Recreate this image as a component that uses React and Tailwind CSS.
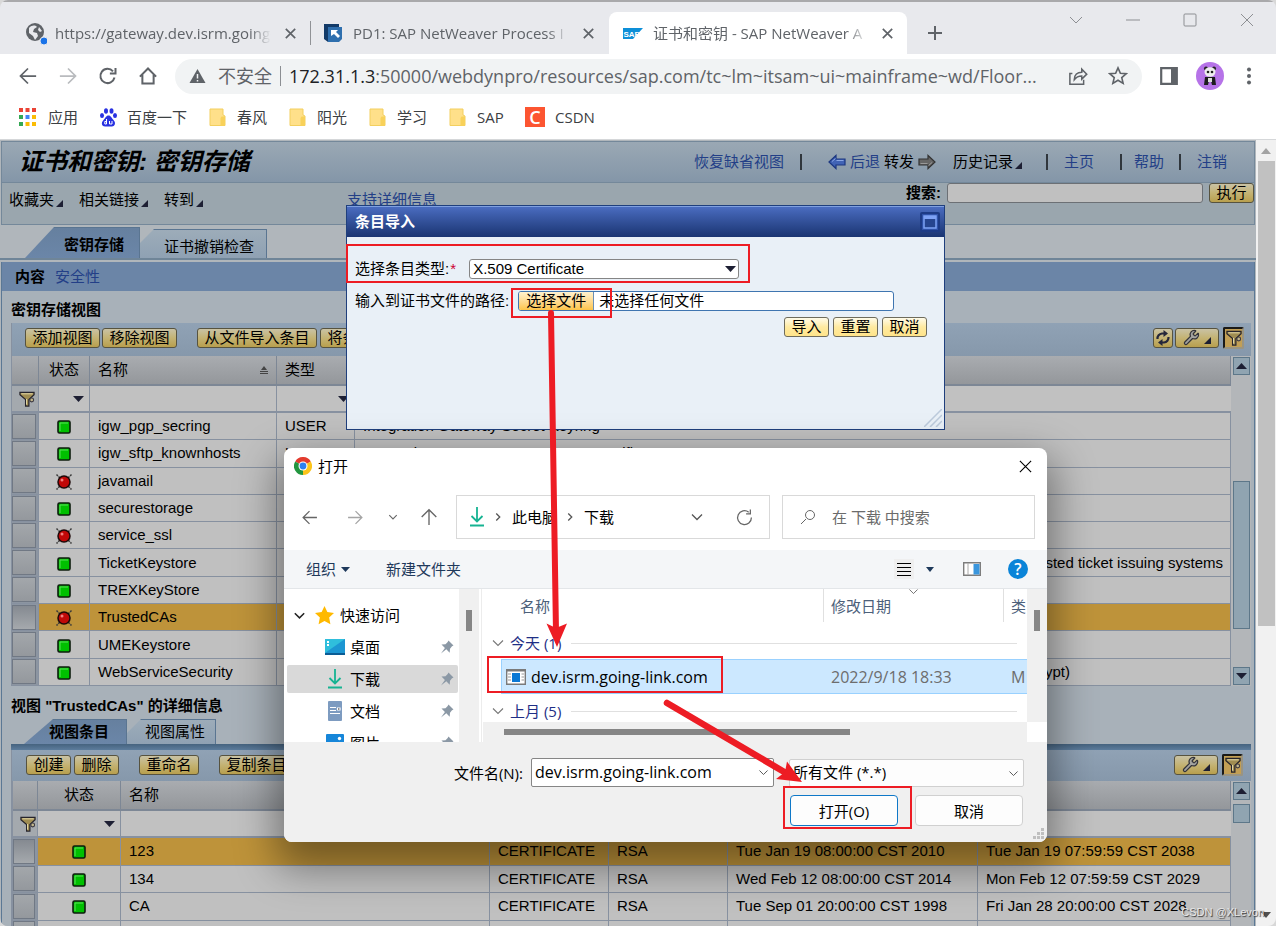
import React, { useState } from 'react';
import clsx from 'clsx';
import { Wrench as WrenchIcon } from 'lucide-react';

const UI_FONT = "font-['Open_Sans','Noto_Sans_CJK_SC',sans-serif]";
const SAP_FONT = "font-['Liberation_Sans','Noto_Sans_CJK_SC',sans-serif]";

const bookmarks = ['春风', '阳光', '学习', 'SAP'];

const keystoreViews = [
  { name: 'igw_pgp_secring', ok: true, type: 'USER', text: 'Integration Gateway Secret Keyring' },
  { name: 'igw_sftp_knownhosts', ok: true, type: 'USER', text: 'Integration Gateway Known Hosts Certificates' },
  { name: 'javamail', ok: false },
  { name: 'securestorage', ok: true },
  { name: 'service_ssl', ok: false },
  { name: 'TicketKeystore', ok: true, tail: 'trusted ticket issuing systems', pad: 'pr-[7px]' },
  { name: 'TREXKeyStore', ok: true },
  { name: 'TrustedCAs', ok: false, selected: true },
  { name: 'UMEKeystore', ok: true },
  { name: 'WebServiceSecurity', ok: true, tail: '(encrypt/decrypt)', pad: 'pr-40' },
];

const entries = [
  { name: '123', algo: 'RSA', from: 'Tue Jan 19 08:00:00 CST 2010', to: 'Tue Jan 19 07:59:59 CST 2038', selected: true },
  { name: '134', algo: 'RSA', from: 'Wed Feb 12 08:00:00 CST 2014', to: 'Mon Feb 12 07:59:59 CST 2029' },
  { name: 'CA', algo: 'RSA', from: 'Tue Sep 01 20:00:00 CST 1998', to: 'Fri Jan 28 20:00:00 CST 2028' },
];

/* ---------- icons ---------- */

const Stroke = ({ d, size = 16, w = 1.5, className }) => (
  <svg width={size} height={size} viewBox="0 0 16 16" fill="none" stroke="currentColor" strokeWidth={w} className={clsx('shrink-0', className)}>
    <path d={d} />
  </svg>
);

const X_PATH = 'M3 3l10 10M13 3L3 13';
const CHEVRON_DOWN = 'M3 5.5l5 5 5-5';
const CHEVRON_RIGHT = 'M6 4l4 4-4 4';

const Corner = () => (
  <svg width="7" height="7" viewBox="0 0 7 7" className="mb-[3px] shrink-0 self-end">
    <path d="M7 0v7H0z" fill="#1d1f33" />
  </svg>
);

const Caret = ({ className, up }) => (
  <svg width="11" height="6" viewBox="0 0 11 6" className={clsx('pointer-events-none shrink-0', className)}>
    <path d={up ? 'M0 6h11L5.500 0z' : 'M0 0h11L5.500 6z'} fill="#1d1f33" />
  </svg>
);

const Folder = () => (
  <svg width="17" height="19" viewBox="0 0 17 19">
    <path d="M1 1h13v6l2 1v9.500H1z" fill="#ffe08a" stroke="#f3cf5f" />
    <path d="M11.500 18V10l1-1.500H16V17l-1 1z" fill="#f8d15a" />
  </svg>
);

const Status = ({ ok }) =>
  ok ? (
    <svg width="14" height="14" viewBox="0 0 14 14" className="mx-auto mt-0.5">
      <rect x="1" y="1" width="12" height="12" rx="1.500" fill="#00c000" stroke="#0c1c0c" strokeWidth="1.600" />
      <path d="M3 11V3h8" stroke="#5ae05a" fill="none" />
    </svg>
  ) : (
    <svg width="18" height="18" viewBox="0 0 18 18" className="mx-auto mt-0.5">
      <path d="M1.500 1.500l15 15M16.500 1.500l-15 15" stroke="#3c3c3c" strokeWidth="1.500" strokeDasharray="2 .8" />
      <circle cx="9" cy="9" r="6" fill="#c00808" stroke="#1c0808" strokeWidth="1.500" />
      <circle cx="7" cy="7" r="1.500" fill="#f08080" />
    </svg>
  );

const Funnel = () => (
  <svg width="16" height="16" viewBox="0 0 17 17" className="shrink-0">
    <path d="M1 1.500h15v2.500L10.500 9v7h-3.500V9L1 4z" fill="#a08d52" stroke="#26242c" strokeWidth="1.300" />
    <path d="M2.500 3h12M8 8.500v6" stroke="#e5dcae" />
    <circle cx="13.500" cy="9.500" r="2" fill="#c3b78c" stroke="#3c3a42" strokeWidth="1.200" />
  </svg>
);

const Wrench = () => <WrenchIcon size={17} strokeWidth={1.8} fill="#a3a3a0" color="#33333a" />;

const Refresh = () => (
  <svg width="16" height="16" viewBox="0 0 16 16" fill="none" stroke="#25273a" strokeWidth="2.200">
    <path d="M2.500 9a5 5 0 0 1 4.500-5.500h2M13.500 7a5 5 0 0 1-4.500 5.500H7" />
    <path d="M8.500 0v7l4.500-3.500zM7.500 9v7L3 12.500z" fill="#25273a" stroke="none" />
  </svg>
);

const BigArrow = ({ back }) => (
  <svg width="18" height="16" viewBox="0 0 18 16" className={back ? '' : 'rotate-180'}>
    <path d="M1 8l7-6.500v3.500h9v6H8v3.500z" fill={back ? '#4163b5' : '#666'} stroke={back ? '#1c3780' : '#333'} strokeWidth="1.200" />
    <path d="M4 7.500l3.500-3M8.500 6.500h7" stroke={back ? '#8aa6e4' : '#999'} />
  </svg>
);

const DownloadIcon = ({ size = 20 }) => (
  <svg width={size} height={size} viewBox="0 0 20 20" fill="none" stroke="#16b392" strokeWidth="1.800">
    <path d="M10 0v14M4.500 9l5.500 5.500L15.500 9M3 18.500h14" />
  </svg>
);

const Pin = () => (
  <svg width="14" height="14" viewBox="0 0 14 14" className="ml-auto shrink-0">
    <path d="M8.500.5l5 5-1.500.8-2 2.400-.3 4L6.300 9.300 1 13.500 4.900 7.900 1.500 4.500l4-.3 2.200-2.200z" fill="#8b98a5" />
  </svg>
);

const ChromeLogo = () => (
  <svg width="18" height="18" viewBox="0 0 18 18">
    <path d="M9 9L1.200 4.500A9 9 0 0 1 16.800 4.500z" fill="#e33b2e" />
    <path d="M9 9l7.800-4.500A9 9 0 0 1 9 18z" fill="#fcc41a" />
    <path d="M9 9v9A9 9 0 0 1 1.200 4.500z" fill="#22963f" />
    <circle cx="9" cy="9" r="4.500" fill="#fff" />
    <circle cx="9" cy="9" r="3.400" fill="#2d7ff0" />
  </svg>
);

/* ---------- browser chrome ---------- */

const Tab = ({ icon, title, width }) => (
  <div className={clsx('flex h-full items-center', width)}>
    {icon}
    <span className="ml-2 flex-1 overflow-hidden text-[15px] whitespace-nowrap text-[#5f6368] [mask-image:linear-gradient(to_right,#000_90%,transparent)]">{title}</span>
    <button aria-label="关闭标签页" className="ml-3 text-[#5f6368]">
      <Stroke d={X_PATH} size={15} w={1.8} />
    </button>
  </div>
);

const BrowserBar = () => (
  <header className={clsx('shrink-0 text-[#5f6368]', UI_FONT)}>
    <div className="flex h-[54px] items-end border-t-2 border-[#a9a9ab] bg-[#e8e9ed]">
      <div className="flex h-[42px] min-w-0 flex-1 items-center">
        <div className="flex h-full w-[310px] items-center pl-[25px]">
          <Tab
            width="w-[273px]"
            title="https://gateway.dev.isrm.going-link"
            icon={
              <svg width="22" height="23" viewBox="0 0 22 23" className="shrink-0">
                <circle cx="10" cy="10" r="9" fill="#5f6368" />
                <path d="M4 6c3-3 6-3 8-1l-3 2-1 3 4 1 1 3-3 4-2-4-4-3zM14 5l3 4-2 1-2-2z" fill="#e8e9ed" />
                <circle cx="19" cy="19" r="4" fill="#1a73e8" stroke="#e8e9ed" />
              </svg>
            }
          />
        </div>
        <div className="flex h-6 w-[299px] items-center border-l border-[#909296] pl-3">
          <Tab
            width="w-[273px]"
            title="PD1: SAP NetWeaver Process I"
            icon={
              <svg width="20" height="20" viewBox="0 0 20 20" className="mr-0.5 shrink-0">
                <path d="M1 1h15v4H5v14L1 16z" fill="#123a68" />
                <path d="M5 4h14v12l-3 3H5z" fill="#2f6fae" />
                <path d="M8 7h7l-2 2 4 4-2 2-4-4-3 2z" fill="#fff" />
              </svg>
            }
          />
        </div>
        <div className="flex h-full w-[298px] items-center rounded-t-lg bg-white pr-3 pl-3.5">
          <Tab
            width="w-full"
            title="证书和密钥 - SAP NetWeaver A"
            icon={
              <svg width="20" height="11" viewBox="0 0 20 11" className="mr-0.5 shrink-0">
                <path d="M0 0h20L10 11H0z" fill="#0d8fd8" />
                <text x="0.500" y="8.500" fontSize="8" fontWeight="700" fill="#fff" fontFamily="Liberation Sans">SAP</text>
              </svg>
            }
          />
        </div>
        <button aria-label="新标签页" className="ml-5">
          <Stroke d="M8 1v14M1 8h14" w={2} />
        </button>
      </div>
      <div className="flex gap-[41px] self-start pt-2.5 pr-[21px] text-[#8d8f93]">
        <button aria-label="搜索标签页"><Stroke d="M2 5l6 6 6-6" w={1} /></button>
        <button aria-label="最小化"><Stroke d="M1 8h14" w={1} /></button>
        <button aria-label="最大化"><Stroke d="M3 2h10a1 1 0 0 1 1 1v10a1 1 0 0 1-1 1H3a1 1 0 0 1-1-1V3a1 1 0 0 1 1-1z" w={1} /></button>
        <button aria-label="关闭"><Stroke d="M2 2l12 12M14 2L2 14" w={1} /></button>
      </div>
    </div>

    <div className="flex h-11 items-center bg-white pl-[18px]">
      <div className="flex gap-5">
        <button aria-label="后退"><Stroke d="M14.500 8H2M8 2L2 8l6 6" size={20} w={1.4} /></button>
        <button aria-label="前进" className="text-[#b9bbbe]"><Stroke d="M1.500 8H14M8 2l6 6-6 6" size={20} w={1.4} /></button>
        <button aria-label="重新加载"><Stroke d="M13.200 9.200A5.700 5.700 0 1 1 12 4.300M14 1.500v4.500H9.500" size={20} w={1.6} /></button>
        <button aria-label="主页"><Stroke d="M1.500 8.500L8 2l6.500 6.500M3.500 7v7h9V7" size={20} w={1.6} /></button>
      </div>
      <div className="ml-[17px] flex h-[35px] min-w-0 flex-1 items-center rounded-full bg-[#f1f3f4] pr-3.5 pl-3.5">
        <svg width="17" height="16" viewBox="0 0 17 16" className="shrink-0">
          <path d="M8.500 1L16.500 15H.5z" fill="#5f6368" />
          <path d="M8.500 6v4.500M8.500 12v1.500" stroke="#f1f3f4" strokeWidth="1.500" />
        </svg>
        <span className="ml-3 text-lg whitespace-nowrap">不安全</span>
        <span className="mx-2 h-5 w-px shrink-0 bg-[#8c8f93]" />
        <span className="min-w-0 flex-1 text-lg whitespace-nowrap">
          <span className="text-[#202124]">172.31.1.3</span>:50000/webdynpro/resources/sap.com/tc~lm~itsam~ui~mainframe~wd/Floor...
        </span>
        <button aria-label="分享" className="ml-4"><Stroke d="M3.500 6H1.500v8.500h11V11M5 11c0-4 2.500-6 6-6V2.500L15 6.500l-4 4V8C8 8 6.500 9 5 11z" size={20} w={1.2} /></button>
        <button aria-label="收藏" className="ml-5"><Stroke d="M8 1.500l1.900 4.300 4.600.4-3.500 3.100 1.100 4.600L8 11.400l-4.100 2.500L5 9.300 1.500 6.200l4.600-.4z" size={20} w={1.3} /></button>
      </div>
      <div className="ml-[18px] flex items-center gap-[18px] pr-6">
        <button aria-label="侧边栏">
          <svg width="18" height="18" viewBox="0 0 18 18"><path d="M1.200 1.200h15.600v15.600H1.200z" fill="#fff" stroke="#5f6368" strokeWidth="2.200" /><path d="M11 1h6v16h-6z" fill="#5f6368" /></svg>
        </button>
        <button aria-label="个人资料">
          <svg width="28" height="28" viewBox="0 0 28 28">
            <circle cx="14" cy="14" r="14" fill="#b673e8" />
            <circle cx="10" cy="6.500" r="2" fill="#222" /><circle cx="18" cy="6.500" r="2" fill="#222" />
            <ellipse cx="14" cy="10" rx="5.500" ry="4.800" fill="#eee" />
            <circle cx="12" cy="10" r="1.300" fill="#222" /><circle cx="16" cy="10" r="1.300" fill="#222" />
            <path d="M9 15h10l1 8h-4l-1-4h-2l-1 4H8z" fill="#1c1c1c" />
            <path d="M12 16h4v4h-4z" fill="#ddd" />
          </svg>
        </button>
        <button aria-label="菜单" className="ml-1">
          <svg width="6" height="18" viewBox="0 0 6 18" fill="#5f6368"><circle cx="3" cy="2.500" r="2" /><circle cx="3" cy="9" r="2" /><circle cx="3" cy="15.500" r="2" /></svg>
        </button>
      </div>
    </div>

    <nav className="flex h-[42px] items-center border-b border-[#d5d7d9] bg-white pb-[3px] pl-[19px] text-[15px] text-[#3c4043]">
      <a href="#apps" className="flex items-center gap-3">
        <svg width="17" height="18" viewBox="0 0 17 18">
          <path d="M0 0h4v4H0zM6.500 0h4v4h-4zM13 0h4v4h-4z" fill="#ea4335" />
          <path d="M0 7h4v4H0zM0 14h4v4H0z" fill="#34a853" />
          <path d="M6.500 7h4v4h-4z" fill="#4285f4" />
          <path d="M13 7h4v4h-4zM6.500 14h4v4h-4zM13 14h4v4h-4z" fill="#fbbc04" />
        </svg>
        应用
      </a>
      <a href="#baidu" className="ml-[22px] flex items-center gap-2.5">
        <svg width="17" height="19" viewBox="0 0 17 19" fill="#2932e1">
          <ellipse cx="6" cy="3" rx="2" ry="2.800" /><ellipse cx="11.500" cy="3" rx="2" ry="2.800" />
          <ellipse cx="2" cy="7.500" rx="2" ry="2.600" /><ellipse cx="15" cy="7.500" rx="2" ry="2.600" />
          <path d="M8.500 7.500c2.500 0 3 2.500 5 4.500 3 3 1 6.500-1.500 6.500H5C2 18.500.5 15 3.500 12c2-2 2.500-4.500 5-4.500z" />
          <path d="M6.500 11v5H4.800v-2.500h1.700M9.500 13v3h2.500v-3" stroke="#fff" fill="none" />
        </svg>
        百度一下
      </a>
      {bookmarks.map((b) => (
        <a key={b} href="#folder" className="ml-[22px] flex w-[58px] items-center gap-[11px]">
          <Folder />
          {b}
        </a>
      ))}
      <a href="#csdn" className="ml-[18px] flex items-center gap-2.5">
        <span className="flex size-5 items-center justify-center bg-[#fc5531] text-lg leading-5 font-semibold text-white">C</span>
        CSDN
      </a>
    </nav>
  </header>
);

/* ---------- SAP page parts ---------- */

const SapButton = ({ children, dim = true, className }) => (
  <button
    className={clsx(
      'flex h-5 shrink-0 items-center justify-center rounded-[3px] border text-[15px] leading-[18px] whitespace-nowrap text-black',
      dim ? 'border-[#57533f] bg-linear-to-b from-[#c9c2a4] via-[#c4b373] to-[#b89f4d]' : 'border-[#6f6c5c] bg-linear-to-b from-[#fffbe9] via-[#ffeaa0] to-[#ffe48a]',
      className,
    )}
  >
    {children}
  </button>
);

const FilterToggle = () => (
  <button aria-label="过滤器" className="flex h-[22px] w-[21px] items-center justify-center rounded-xs border-2 border-[#1b1a18] border-r-[#9a9482] border-b-[#9a9482] bg-[#c29f55]">
    <Funnel />
  </button>
);

const ScrollKey = ({ up }) => (
  <button aria-label={up ? '向上滚动' : '向下滚动'} className="flex h-[18px] w-[17px] shrink-0 items-center justify-center border border-[#5d7789] bg-[#90a4b1]">
    <Caret up={up} />
  </button>
);

const Th = ({ children, className = 'text-left' }) => (
  <th className={clsx('h-[30px] border-r border-b-2 border-[#7d8795] bg-linear-to-b from-[#a9acb0] to-[#94979b] px-2 font-normal', className)}>{children}</th>
);

const FilterCells = ({ rest }) => (
  <tr className="h-[27px]">
    <td className="border-r border-b-2 border-[#8791a0] bg-[#a4a9ae] pl-[7px]"><Funnel /></td>
    <td className="border-r border-b-2 border-[#8791a0] bg-[#c1c1c1]">
      <div className="relative flex items-center justify-end pr-[5px]">
        <select aria-label="按状态过滤" className="absolute inset-0 w-full appearance-none" />
        <Caret />
      </div>
    </td>
    {rest.map((kind, i) => (
      <td key={i} className={clsx('border-b-2 border-[#8791a0] bg-[#c1c1c1]', i < rest.length - 1 && 'border-r')}>
        {kind === 'select' ? (
          <div className="relative flex items-center justify-end pr-[5px]">
            <select aria-label="过滤" className="absolute inset-0 w-full appearance-none" />
            <Caret />
          </div>
        ) : (
          <input aria-label="过滤" className="block h-5 w-full px-2 outline-none" />
        )}
      </td>
    ))}
  </tr>
);

const RowKey = ({ selected }) => (
  <td className="border-r border-b border-[#8791a0] bg-[#8c95a1] p-0 pr-0.5">
    <button aria-label="选择行" className={clsx('block h-[25px] w-full border border-[#707884] bg-linear-to-b', selected ? 'from-[#858a91] to-[#a5a9ad]' : 'from-[#a3a7ab] to-[#94989d]')} />
  </td>
);

const cell = (selected) => clsx('border-r border-b border-[#8791a0] px-2 py-0 whitespace-nowrap', selected ? 'bg-[#be933a]' : 'bg-[#c0c0c0]');

const SapTabs = ({ tabs }) => (
  <div className="flex items-end" role="tablist">
    {tabs.map((t) => (
      <button
        key={t.label}
        role="tab"
        aria-selected={!!t.active}
        className={clsx(
          'shrink-0 border-t border-r border-[#5a7591] whitespace-nowrap text-[15px] leading-5',
          t.active
            ? 'bg-linear-to-b from-[#66809f] to-[#6b86a8] font-bold [clip-path:polygon(29px_0,100%_0,100%_100%,0_100%)]'
            : 'bg-linear-to-b from-[#9dacb9] to-[#8fa1b3] [clip-path:polygon(14px_0,100%_0,100%_100%,0_100%,0_14px)]',
          t.size,
        )}
      >
        {t.label}
      </button>
    ))}
  </div>
);

const Sep = ({ className }) => <span className={clsx('h-4 w-0.5 bg-[#30363c]', className)} />;

const SapHeader = () => (
  <div className="mt-px mr-px ml-px border border-[#74889a] text-[15px] leading-5">
    <div className="flex h-[41px] items-center justify-between border-b border-[#74889a] bg-linear-to-b from-[#9aa8b4] to-[#8496a8] pr-[27px] pl-[17px]">
      <h1 className="text-2xl leading-7 font-bold whitespace-nowrap italic">证书和密钥: 密钥存储</h1>
      <div className="flex items-center whitespace-nowrap text-[#233f87]">
        <a href="#reset">恢复缺省视图</a>
        <Sep className="ml-4" />
        <a href="#back" className="ml-[26px] flex items-center gap-1"><BigArrow back />后退</a>
        <a href="#fwd" className="ml-1 flex items-center gap-1 text-black">转发<BigArrow /></a>
        <button className="ml-[17px] flex items-center text-black">历史记录<span className="ml-0.5 self-end"><Corner /></span></button>
        <Sep className="ml-6" />
        <a href="#home" className="ml-4">主页</a>
        <Sep className="ml-[26px]" />
        <a href="#help" className="ml-3">帮助</a>
        <Sep className="ml-[15px]" />
        <a href="#logoff" className="ml-4">注销</a>
      </div>
    </div>
    <div className="flex h-[41px] bg-[#9aa6ae]">
      <div className="flex h-full items-center gap-4 pb-2 pl-[7px] whitespace-nowrap">
        {['收藏夹', '相关链接', '转到'].map((m) => (
          <button key={m} className="flex items-end gap-0.5">
            {m}
            <Corner />
          </button>
        ))}
        <a href="#support" className="ml-32 text-[#233f87]">支持详细信息</a>
      </div>
      <form className="ml-auto flex h-5 items-center">
        <label htmlFor="search" className="mr-1.5 font-bold">搜索:</label>
        <input id="search" className="h-5 w-64 rounded-[3px] border border-[#6c7075] bg-[#c0c0c0] px-1" />
        <SapButton className="ml-1.5 w-[45px]">执行</SapButton>
      </form>
    </div>
  </div>
);

const ViewTable = () => (
  <div className="flex border-l border-[#8791a0]">
    <table className="h-[330px] min-w-0 flex-1 table-fixed border-separate border-spacing-0 text-[15px] leading-5">
      <colgroup>
        <col className="w-[27px]" />
        <col className="w-[51px]" />
        <col className="w-[187px]" />
        <col className="w-[78px]" />
        <col />
      </colgroup>
      <thead>
        <tr className="h-[30px]">
          <Th />
          <Th className="text-center">状态</Th>
          <Th>
            <div className="flex items-center justify-between">
              名称
              <svg width="8" height="8" viewBox="0 0 8 8"><path d="M4 0l3 4H1zM0 5h8v1H0zM0 7h8v1H0z" fill="#444" /></svg>
            </div>
          </Th>
          <Th>类型</Th>
          <Th>描述</Th>
        </tr>
      </thead>
      <tbody>
        <FilterCells rest={['input', 'select', 'input']} />
        {keystoreViews.map((v) => (
          <tr key={v.name}>
            <RowKey selected={v.selected} />
            <td className={clsx(cell(v.selected), 'text-center')}><Status ok={v.ok} /></td>
            <td className={cell(v.selected)}>{v.name}</td>
            <td className={cell(v.selected)}>{v.type}</td>
            <td className={clsx(cell(v.selected), v.tail && 'text-right', v.pad)}>{v.text || v.tail}</td>
          </tr>
        ))}
      </tbody>
    </table>
    <div className="flex w-5 shrink-0 flex-col items-center bg-[#b3b6b9] pt-px pb-px">
      <ScrollKey up />
      <div className="mt-[106px] mb-auto h-[148px] w-[17px] border border-[#5d7789] bg-[#90a4b1]" />
      <ScrollKey />
    </div>
  </div>
);

const EntryTable = () => (
  <div className="flex border-l-2 border-[#8791a0]">
    <table className="h-[167px] min-w-0 flex-1 table-fixed border-separate border-spacing-0 text-[15px] leading-5">
      <colgroup>
        <col className="w-[25px]" />
        <col className="w-[83px]" />
        <col className="w-[369px]" />
        <col className="w-[119px]" />
        <col className="w-[119px]" />
        <col className="w-[250px]" />
        <col />
      </colgroup>
      <thead>
        <tr className="h-[30px]">
          <Th />
          <Th className="text-center">状态</Th>
          <Th>名称</Th>
          <Th>类型</Th>
          <Th>算法</Th>
          <Th>有效期自</Th>
          <Th>至</Th>
        </tr>
      </thead>
      <tbody>
        <FilterCells rest={['input', 'input', 'input', 'input', 'input']} />
        {entries.map((e) => (
          <tr key={e.name}>
            <RowKey selected={e.selected} />
            <td className={cell(e.selected)}><Status ok /></td>
            <td className={cell(e.selected)}>{e.name}</td>
            <td className={cell(e.selected)}>CERTIFICATE</td>
            <td className={cell(e.selected)}>{e.algo}</td>
            <td className={cell(e.selected)}>{e.from}</td>
            <td className={cell(e.selected)}>{e.to}</td>
          </tr>
        ))}
        <tr>
          <RowKey />
          {[0, 1, 2, 3, 4, 5].map((i) => <td key={i} className={cell(false)} />)}
        </tr>
      </tbody>
    </table>
    <div className="flex w-5 shrink-0 flex-col items-center gap-1 bg-[#b3b6b9] pt-px">
      <ScrollKey up />
      <div className="h-[19px] w-[17px] border border-[#5d7789] bg-[#90a4b1]" />
    </div>
  </div>
);

const SapPage = () => (
  <div className="min-w-0 flex-1 overflow-hidden bg-[#b0b6bb] text-black">
    <SapHeader />
    <div className="flex h-[35px] items-end border-b-2 border-[#6f8598] pl-[25px]">
      <SapTabs
        tabs={[
          { label: '密钥存储', active: true, size: 'h-[31px] w-[115px] pt-1 pl-6' },
          { label: '证书撤销检查', size: 'h-[29px] w-[127px] pt-1.5 pl-3' },
        ]}
      />
    </div>
    <div className="mx-px border-x border-[#5b7895] bg-[#a8b1b9]">
      <nav className="mt-0.5 flex h-[29px] items-center gap-2.5 bg-[#6b85a7] pl-[13px] text-[15px] leading-5">
        <b>内容</b>
        <a href="#security" className="text-[#233f87]">安全性</a>
      </nav>
      <div className="pr-[3px] pl-[9px]">
        <h2 className="h-8 pt-[9px] text-[15px] leading-5 font-bold">密钥存储视图</h2>
        <div className="flex h-[33px] items-center border-l border-[#8791a0] bg-linear-to-b from-[#90a2b5] to-[#8698ab] pb-1 pl-[13px]">
          <SapButton className="w-[75px]">添加视图</SapButton>
          <SapButton className="ml-0.5 w-[75px]">移除视图</SapButton>
          <SapButton className="ml-5 w-[120px]">从文件导入条目</SapButton>
          <SapButton className="ml-[3px] w-[120px]">将条目导出文件</SapButton>
          <div className="ml-auto flex items-center gap-0.5 pr-[7px]">
            <SapButton className="w-5"><Refresh /></SapButton>
            <SapButton className="mr-0.5 w-11 gap-1"><Wrench /><Corner /></SapButton>
            <FilterToggle />
          </div>
        </div>
        <ViewTable />
        <h2 className="h-[33px] pt-2.5 text-[15px] leading-5 font-bold">视图 "TrustedCAs" 的详细信息</h2>
        <div className="flex h-[25px] items-end pl-[13px]">
          <SapTabs
            tabs={[
              { label: '视图条目', active: true, size: 'h-[25px] w-[103px] pl-2' },
              { label: '视图属性', size: 'h-[25px] w-[89px] pl-2' },
            ]}
          />
        </div>
        <div className="h-1.5 bg-linear-to-b from-[#46637f] to-[#5c7c9c]" />
        <div className="flex h-[31px] items-center border-l border-[#8791a0] bg-linear-to-b from-[#90a2b5] to-[#8698ab] pb-0.5 pl-[14px]">
          <SapButton className="w-[45px]">创建</SapButton>
          <SapButton className="ml-[3px] w-[45px]">删除</SapButton>
          <SapButton className="ml-5 w-[60px]">重命名</SapButton>
          <SapButton className="ml-5 w-[75px]">复制条目</SapButton>
          <div className="ml-auto flex items-center gap-1 pr-2">
            <SapButton className="w-11 gap-1"><Wrench /><Corner /></SapButton>
            <FilterToggle />
          </div>
        </div>
        <EntryTable />
      </div>
    </div>
  </div>
);

/* ---------- import popup ---------- */

const ImportPopup = () => (
  <section className={clsx('absolute top-[65px] left-[346px] flex h-[225px] w-[599px] flex-col border border-[#1f3f7d] bg-[#e9f0f7] text-[15px] leading-5 text-black', SAP_FONT)}>
    <div className="flex h-[31px] shrink-0 items-center justify-between border-t border-[#7fa0e0] bg-linear-to-b from-[#4a6cc0] to-[#1b3572] pr-1 pl-2 text-white">
      <b>条目导入</b>
      <button aria-label="最大化" className="flex size-5 items-center justify-center rounded-xs border-2 border-[#1d3b86] bg-[#2f52a8]">
        <svg width="14" height="14" viewBox="0 0 14 14"><path d="M1 1h12v12H1z" fill="#26458f" stroke="#7ea2f5" strokeWidth="1.500" /><path d="M1 1h12v3H1z" fill="#7ea2f5" /></svg>
      </button>
    </div>
    <div className="mt-[22px] flex items-center pl-2">
      <label htmlFor="entryType" className="flex">选择条目类型:<span className="w-2 text-center text-[#c03]">*</span></label>
      <div className="relative ml-3 w-[270px]">
        <select id="entryType" className="block h-5 w-full appearance-none rounded-[3px] border border-[#858585] bg-white px-[3px] leading-[18px]">
          <option>X.509 Certificate</option>
        </select>
        <Caret className="absolute top-[7px] right-[3px]" />
      </div>
    </div>
    <div className="mt-3 flex items-center pl-2">
      <span>输入到证书文件的路径:</span>
      <div className="ml-[9px] flex h-5 w-[376px] items-center overflow-hidden rounded-[3px] border border-[#3f75b0] bg-white">
        <button className="h-full w-[75px] border-r border-[#6b8fb5] bg-linear-to-b from-[#fff2cf] to-[#fdc445] leading-[18px]">选择文件</button>
        <span className="ml-[5px]">未选择任何文件</span>
      </div>
    </div>
    <div className="mt-1.5 flex justify-end gap-1 pr-[17px]">
      <SapButton dim={false} className="w-[45px]">导入</SapButton>
      <SapButton dim={false} className="w-[45px]">重置</SapButton>
      <SapButton dim={false} className="w-[45px]">取消</SapButton>
    </div>
    <svg width="18" height="18" viewBox="0 0 18 18" className="mt-auto mr-0.5 mb-0.5 self-end" stroke="#bccadb" strokeWidth="1.500">
      <path d="M0 18L18 0M6 18L18 6M12 18l6-6" />
    </svg>
  </section>
);

/* ---------- file dialog ---------- */

const QuickItem = ({ icon, label, active }) => (
  <button className={clsx('mr-px ml-[3px] flex h-7 shrink-0 items-center rounded-xs pr-1 pl-[38px]', active && 'bg-[#d9d9d9]')}>
    <span className="flex w-5 justify-center">{icon}</span>
    <span className="ml-[5px]">{label}</span>
    <Pin />
  </button>
);

const GroupRow = ({ label, height }) => (
  <tr>
    <td colSpan={3} className={clsx('p-0 pb-1.5 align-bottom', height)}>
      <div className="flex items-center pr-2.5 pl-1.5 text-[#1f2f86]">
        <Stroke d={CHEVRON_DOWN} w={1.1} className="text-[#777]" />
        <span className="ml-1 whitespace-nowrap">{label}</span>
        <span className="ml-2.5 h-px flex-1 bg-[#e0e0e0]" />
      </div>
    </td>
  </tr>
);

const FileDialog = () => {
  const [fileName, setFileName] = useState('dev.isrm.going-link.com');

  return (
    <section className={clsx('absolute top-[308px] left-[284px] flex w-[763px] flex-col overflow-hidden rounded-lg bg-white text-[15px] leading-5 text-black shadow-[0_18px_40px_8px_rgba(0,0,0,0.4)]', UI_FONT)}>
      <div className="flex h-9 items-center pr-3.5 pl-2.5">
        <ChromeLogo />
        <span className="ml-1.5">打开</span>
        <button aria-label="关闭" className="ml-auto"><Stroke d="M2 2l12 12M14 2L2 14" w={1.2} size={15} /></button>
      </div>

      <div className="mt-[11px] flex h-11 items-center pr-3 pl-[17px] text-[#666]">
        <button aria-label="后退"><Stroke d="M15 8H2M8 2L2 8l6 6" w={1.2} size={17} /></button>
        <button aria-label="前进" className="ml-[29px] text-[#a5a5a5]"><Stroke d="M1 8h13M8 2l6 6-6 6" w={1.2} size={17} /></button>
        <button aria-label="最近位置" className="ml-[23px]"><Stroke d={CHEVRON_DOWN} size={12} w={1.5} /></button>
        <button aria-label="上移" className="ml-[21px]"><Stroke d="M8 15V1.500M1.500 8L8 1.500 14.500 8" w={1.2} size={18} /></button>
        <div className="ml-[18px] flex h-full w-[314px] items-center border border-[#d9d9d9] pl-2.5 text-black">
          <DownloadIcon />
          <Stroke d={CHEVRON_RIGHT} size={14} className="ml-1 text-[#555]" />
          <span className="ml-[7px]">此电脑</span>
          <Stroke d={CHEVRON_RIGHT} size={14} className="ml-1.5 text-[#555]" />
          <span className="ml-[7px]">下载</span>
          <button aria-label="展开" className="ml-auto text-[#555]"><Stroke d={CHEVRON_DOWN} w={1.3} /></button>
          <button aria-label="刷新" className="mr-4 ml-[31px] text-[#666]"><Stroke d="M14.500 8A6.500 6.500 0 1 1 12 3M13.500 .5v4H9.500" size={17} w={1.2} /></button>
        </div>
        <div className="ml-3 flex h-full flex-1 items-center border border-[#d9d9d9] pl-[17px]">
          <Stroke d="M1 15l5-5M10 1.500a4.500 4.500 0 1 1 0 9 4.500 4.500 0 0 1 0-9z" w={1} />
          <input aria-label="搜索" placeholder="在 下载 中搜索" className="ml-4 min-w-0 flex-1 outline-none placeholder:text-[#6b6b6b]" />
        </div>
      </div>

      <div className="mt-[11px] flex h-[39px] items-center border-b border-[#e3e6e9] bg-[#f4f6f8] pr-[19px] pl-[22px] text-[#1e395b]">
        <button className="flex items-center gap-[5px]">组织<svg width="9" height="5" viewBox="0 0 9 5"><path d="M0 0h9L4.500 5z" fill="#1e395b" /></svg></button>
        <button className="ml-9">新建文件夹</button>
        <button aria-label="更改视图" className="ml-auto flex size-5 items-center justify-center bg-[#efefef] text-black">
          <Stroke d="M1 2.500h14M1 6.500h14M1 10.500h14M1 14.500h14" w={1.2} />
        </button>
        <button aria-label="视图选项" className="ml-3"><svg width="8" height="5" viewBox="0 0 8 5"><path d="M0 0h8L4 5z" fill="#1e395b" /></svg></button>
        <button aria-label="预览窗格" className="ml-[29px]">
          <svg width="18" height="14" viewBox="0 0 18 14"><path d="M.7.700h16.600v12.600H.7z" fill="#fff" stroke="#7d7d7d" strokeWidth="1.400" /><path d="M5 1v12" stroke="#aaa" /><path d="M10.500 2h6v10.500h-6z" fill="#3a96dd" /></svg>
        </button>
        <button aria-label="帮助" className="ml-[27px] flex size-5 items-center justify-center rounded-full bg-[#0a84d8] text-base leading-5 font-semibold text-white">?</button>
      </div>

      <div className="flex h-[153px] overflow-hidden">
        <div className="flex w-[175px] shrink-0 flex-col gap-1 overflow-hidden pt-3">
          <button className="flex h-7 shrink-0 items-center pl-2">
            <Stroke d={CHEVRON_DOWN} size={15} w={1.6} className="text-[#222]" />
            <svg width="19" height="19" viewBox="0 0 18 18" className="ml-2"><path d="M9 0l2.700 5.800 6.300.8-4.600 4.300 1.200 6.300L9 14.100l-5.600 3.100 1.200-6.300L0 6.600l6.300-.8z" fill="#ffb900" /></svg>
            <span className="ml-1.5">快速访问</span>
          </button>
          <QuickItem label="桌面" icon={<svg width="20" height="16" viewBox="0 0 20 16"><path d="M0 0h20v16H0z" fill="#1c96d2" /><path d="M0 0h20L0 14z" fill="#38cfe0" opacity=".7" /><path d="M2 2h2v2H2zM2 5h2v2H2z" fill="#fff" /><path d="M0 14h20v2H0z" fill="#0b5c94" /></svg>} />
          <QuickItem label="下载" active icon={<DownloadIcon />} />
          <QuickItem label="文档" icon={<svg width="14" height="20" viewBox="0 0 14 20"><rect width="14" height="20" rx="1" fill="#7d9bc0" /><path d="M2 6.500h6M2 9.500h6M2 12.500h10M9.500 7h2.500v2H9.500z" stroke="#fff" strokeWidth="1.200" /></svg>} />
          <QuickItem label="图片" icon={<svg width="18" height="18" viewBox="0 0 18 18"><rect width="18" height="18" rx="1" fill="#1686d9" /><circle cx="13.500" cy="4.500" r="1.700" fill="#fff" /><path d="M2 16l6-7 6 7z" fill="#bfe3ff" /></svg>} />
        </div>
        <div className="w-5 shrink-0 bg-[#f0f0f0] pt-[21px] pl-[7px]">
          <div className="h-[21px] w-1.5 bg-[#868686]" />
        </div>
        <div className="ml-0.5 flex min-w-0 flex-1 flex-col border-l border-[#ececec]">
          <div className="flex min-h-0 flex-1">
            <div className="min-w-0 flex-1 overflow-hidden pl-0.5">
              <table className="w-full table-fixed border-separate border-spacing-0">
                <colgroup>
                  <col />
                  <col className="w-[180px]" />
                  <col className="w-[23px]" />
                </colgroup>
                <thead className="text-left text-[#4c607a]">
                  <tr>
                    <th className="h-[33px] border-r border-[#e0e0e0] pl-9 font-normal">名称</th>
                    <th className="relative border-r border-[#e0e0e0] pl-[7px] font-normal">
                      修改日期
                      <Stroke d={CHEVRON_DOWN} size={13} w={1} className="absolute -top-1 left-[83px] text-[#555]" />
                    </th>
                    <th className="overflow-hidden pl-[7px] font-normal whitespace-nowrap">类</th>
                  </tr>
                </thead>
                <tbody>
                  <GroupRow label="今天 (1)" height="h-[37px]" />
                  <tr>
                    <td className="h-[35px] p-0 pl-[17px]">
                      <div className="flex h-[35px] items-center border-y border-l border-[#99d1ff] bg-[#cce8ff] pl-1">
                        <svg width="20" height="16" viewBox="0 0 20 16" className="shrink-0"><path d="M.7.700h18.600v14.600H.7z" fill="#fff" stroke="#7a7a7a" strokeWidth="1.400" /><path d="M0 0h20v2.500H0z" fill="#7a7a7a" /><path d="M6 4h8v9H6z" fill="#0a78d4" /><path d="M2 5h3M2 8h3M2 11h3M15.500 5h2.500M15.500 8h2.500M15.500 11h2.500" stroke="#999" /></svg>
                        <span className="ml-[5px] text-base leading-5 whitespace-nowrap">dev.isrm.going-link.com</span>
                      </div>
                    </td>
                    <td className="h-[35px] border-y border-[#99d1ff] bg-[#cce8ff] p-0 pl-[7px] text-base leading-5 whitespace-nowrap text-[#6d6d6d]">2022/9/18 18:33</td>
                    <td className="h-[35px] border-y border-[#99d1ff] bg-[#cce8ff] p-0 pl-[7px] text-base leading-5 whitespace-nowrap text-[#6d6d6d]">M</td>
                  </tr>
                  <GroupRow label="上月 (5)" height="h-[33px]" />
                </tbody>
              </table>
            </div>
            <div className="w-5 shrink-0 bg-[#f0f0f0] pt-[21px] pl-[7px]">
              <div className="h-[21px] w-1.5 bg-[#868686]" />
            </div>
          </div>
          <div className="mr-5 ml-px flex h-5 shrink-0 items-center bg-[#f0f0f0] pl-[21px]">
            <div className="h-1.5 w-[346px] bg-[#868686]" />
          </div>
        </div>
      </div>

      <div className="bg-[#f0f0f0] pb-4">
        <div className="flex items-center justify-end pt-4 pr-[23px]">
          <label htmlFor="fileName">文件名(N):</label>
          <div className="relative ml-2 w-[243px]">
            <input
              id="fileName"
              value={fileName}
              onChange={(e) => setFileName(e.target.value)}
              className="block h-[29px] w-full rounded-xs border border-[#868686] bg-white px-[3px] pb-0.5 text-base leading-5"
            />
            <Stroke d={CHEVRON_DOWN} size={13} w={1.2} className="absolute top-2 right-1 text-[#555]" />
          </div>
          <div className="relative ml-[15px] w-[235px]">
            <select aria-label="文件类型" className="block h-[28px] w-full appearance-none rounded-xs border border-[#d0d0d0] bg-[#fdfdfd] px-[3px] pb-0.5">
              <option>所有文件 (*.*)</option>
            </select>
            <Stroke d={CHEVRON_DOWN} size={13} w={1.2} className="absolute top-2 right-1 text-[#555]" />
          </div>
        </div>
        <div className="mt-2 flex justify-end gap-[17px] pr-6">
          <button className="h-[31px] w-[108px] rounded border border-[#0f78c8] bg-[#fdfdfd]">打开(O)</button>
          <button className="h-[31px] w-[108px] rounded border border-[#d0d0d0] bg-[#fdfdfd]">取消</button>
        </div>
      </div>
      <svg width="12" height="12" viewBox="0 0 12 12" className="absolute right-0.5 bottom-0.5" fill="#bfbfbf">
        <path d="M8 0h3v3H8zM4 4h3v3H4zM8 4h3v3H8zM0 8h3v3H0zM4 8h3v3H4zM8 8h3v3H8z" />
      </svg>
    </section>
  );
};

/* ---------- tutorial marks ---------- */

const Marks = () => (
  <div className="pointer-events-none absolute inset-0">
    <div className="absolute top-[104px] left-[346px] h-[39px] w-[404px] border-2 border-[#ed1c24]" />
    <div className="absolute top-[148px] left-[511px] h-[30px] w-[101px] border-2 border-[#ed1c24]" />
    <div className="absolute top-[516px] left-[487px] h-[37px] w-[236px] border-2 border-[#ed1c24]" />
    <div className="absolute top-[646px] left-[783px] h-[43px] w-[129px] border-2 border-[#ed1c24]" />
    <svg className="absolute inset-0 size-full" fill="#ed1c24" stroke="#ed1c24">
      <path d="M551 173L556 492" strokeWidth="6" strokeLinecap="round" />
      <path d="M546.500 483.500L556 488 567 483.500 557 507z" stroke="none" />
      <path d="M667 563L786 633" strokeWidth="6.500" strokeLinecap="round" />
      <path d="M787 621.500L785 632 776 639 802 642z" stroke="none" />
    </svg>
    <span className="absolute right-3 bottom-1.5 text-[11px] leading-4 text-[#e8e8e8] [text-shadow:1px_1px_1px_#333]">CSDN @XLevon</span>
  </div>
);

const App = () => (
  <div className="h-screen bg-[#d8d8d8]">
    <div className="flex h-full flex-col overflow-hidden rounded-lg">
      <BrowserBar />
      <main className={clsx('relative flex min-h-0 flex-1 overflow-hidden', SAP_FONT)}>
        <SapPage />
        <div className="flex w-5 shrink-0 flex-col items-center bg-[#f1f1f1] pt-2 pb-2">
          <svg width="10" height="6" viewBox="0 0 10 6"><path d="M0 6h10L5 0z" fill="#a3a3a3" /></svg>
          <div className="mt-[7px] mb-auto h-[465px] w-[17px] bg-[#c1c1c1]" />
          <svg width="10" height="6" viewBox="0 0 10 6"><path d="M0 0h10L5 6z" fill="#505050" /></svg>
        </div>
        <ImportPopup />
        <FileDialog />
        <Marks />
      </main>
    </div>
  </div>
);

export default App;
